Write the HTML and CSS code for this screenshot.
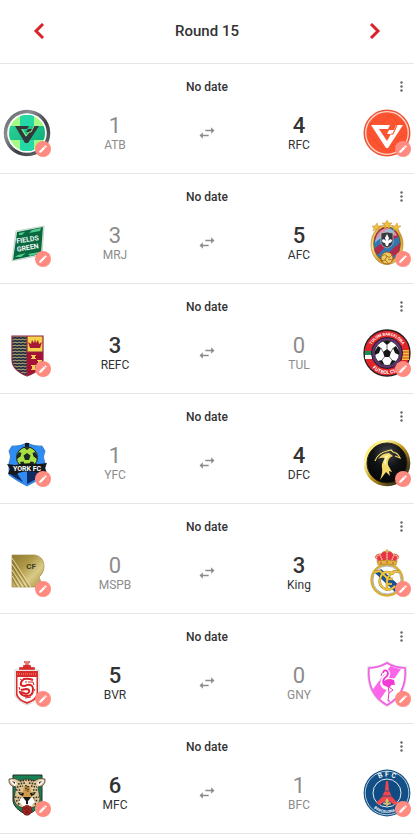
FILE: index.html
```
<!DOCTYPE html>
<html lang="en">
   <head>
      <meta charset="utf-8">
      <meta name="viewport" content="width=device-width, initial-scale=1">
      <title>Round 15</title>
      <link rel="stylesheet" href="styles.css">
   </head>
   <body>
      <!-- shared icons -->
      <svg class="sprite" aria-hidden="true">
         <symbol id="swap" viewBox="0 0 24 24">
            <path d="M7 11l-4 4 4 4v-3h7v-2H7zM21 9l-4-4v3h-7v2h7v3z" />
         </symbol>
         <symbol id="more" viewBox="0 0 16 16">
            <circle cx="8.500" cy="3.500" r="1.200" /><circle cx="8.500" cy="7.500" r="1.200" /><circle cx="8.500" cy="11.500" r="1.200" />
         </symbol>
         <symbol id="edit" viewBox="0 0 24 24">
            <path d="M3 17.2V21h3.8L17.8 9.9l-3.7-3.7zM20.7 7a1 1 0 0 0 0-1.4l-2.3-2.3a1 1 0 0 0-1.4 0l-1.9 1.8 3.8 3.8z" />
         </symbol>
      </svg>

      <header class="round">
         <button class="nav" aria-label="Previous round">
            <svg viewBox="0 0 16 16"><path d="M12 1L5 8l7 7" /></svg>
         </button>
         <h1>Round 15</h1>
         <button class="nav" aria-label="Next round">
            <svg viewBox="0 0 16 16"><path d="M4 1l7 7-7 7" /></svg>
         </button>
      </header>

      <main>
         <section class="match">
            <div class="date">
               <span>No date</span>
               <button class="more" aria-label="More"><svg><use href="#more" /></svg></button>
            </div>
            <div class="teams">
               <div class="crest">
                  <svg viewBox="0 0 48 48">
                     <defs>
                        <linearGradient id="steel" x1="0" y1="0" x2="1" y2="1">
                           <stop offset="0" stop-color="#54565c" /><stop offset=".3" stop-color="#8b8e93" />
                           <stop offset=".6" stop-color="#3c3e44" /><stop offset="1" stop-color="#777a80" />
                        </linearGradient>
                        <linearGradient id="teal" x1="0" y1="0" x2="1" y2="1">
                           <stop offset="0" stop-color="#2fdc9c" /><stop offset="1" stop-color="#08a577" />
                        </linearGradient>
                        <clipPath id="atb"><circle cx="24" cy="24" r="18" /></clipPath>
                     </defs>
                     <circle cx="24" cy="24" r="23.300" fill="url(#steel)" />
                     <circle cx="24" cy="24" r="19.800" fill="#fff" />
                     <g clip-path="url(#atb)">
                        <path fill="#a4fb85" d="M4 4h40v40H4z" />
                        <path fill="url(#teal)" d="M17 4h14v13h13v14H31v13H17V31H4V17h13z" />
                        <path fill="#24d9a5" d="M17 4h14v13H17zM17 31h14v14H17z" />
                     </g>
                     <path fill="#34383a" d="M12 17h14l-2 3h-6l5 8 3-5h-3l2-3h4l2-3h5L25 34h-3z" />
                     <path fill="none" stroke="#a4fb85" stroke-width=".9" d="M19 20l4 7 3-4M26 23h2l3-6" />
                  </svg>
                  <button class="edit" aria-label="Edit ATB"><svg><use href="#edit" /></svg></button>
               </div>
               <div class="score"><b>1</b><span>ATB</span></div>
               <button class="swap" aria-label="Swap teams"><svg><use href="#swap" /></svg></button>
               <div class="score win"><b>4</b><span>RFC</span></div>
               <div class="crest">
                  <svg viewBox="0 0 48 48">
                     <circle cx="24" cy="24" r="23.500" fill="#ee5537" />
                     <circle cx="24" cy="24" r="21.300" fill="#fc5430" stroke="#ffd9cd" stroke-width="1.300" />
                     <path fill="none" stroke="#e9482a" stroke-width=".7" d="M7 16q5-6 9-3t8-4 9 3 7 2M5 25q4 1 6 5t6 7 8 5M31 40q6-5 4-8t7-6" />
                     <path fill="#fff" d="M8 16h19l-2 4h-9l8 12 4-7h-4l2-4h5l2-5h7L25 39h-2z" />
                     <path fill="none" stroke="#fc5430" stroke-width="1.100" d="M28 25h2l4-9" />
                  </svg>
                  <button class="edit" aria-label="Edit RFC"><svg><use href="#edit" /></svg></button>
               </div>
            </div>
         </section>

         <section class="match">
            <div class="date">
               <span>No date</span>
               <button class="more" aria-label="More"><svg><use href="#more" /></svg></button>
            </div>
            <div class="teams">
               <div class="crest">
                  <svg viewBox="0 0 48 48">
                     <path fill="#eef5f0" stroke="#9fb9aa" stroke-width=".6" d="M13 12l28-5-2 29-30 6z" />
                     <path fill="#08683f" d="M14 13l26-5-2 27-28 6z" />
                     <path fill="#52c98d" d="M16 14l6-1-3 3h-3zM29 11l9-2-1 3-11 2zM12 38l3-2 8-2-5 4zM25 35l11-2v2l-9 2z" />
                     <g class="crest-text" fill="#f3f8f4" transform="rotate(-9 24 24)">
                        <text x="25" y="23" font-size="7">FIELDS</text>
                        <text x="24" y="31" font-size="7">GREEN</text>
                     </g>
                  </svg>
                  <button class="edit" aria-label="Edit MRJ"><svg><use href="#edit" /></svg></button>
               </div>
               <div class="score"><b>3</b><span>MRJ</span></div>
               <button class="swap" aria-label="Swap teams"><svg><use href="#swap" /></svg></button>
               <div class="score win"><b>5</b><span>AFC</span></div>
               <div class="crest">
                  <svg viewBox="0 0 48 48">
                     <defs>
                        <linearGradient id="stripes" x1="0" y1="0" x2="8" y2="9" gradientUnits="userSpaceOnUse" spreadMethod="repeat">
                           <stop offset="0" stop-color="#2f78b4" /><stop offset=".5" stop-color="#2f78b4" />
                           <stop offset=".5" stop-color="#b02a50" /><stop offset="1" stop-color="#b02a50" />
                        </linearGradient>
                        <linearGradient id="gold" x1="0" y1="0" x2="1" y2="1">
                           <stop offset="0" stop-color="#c98d20" /><stop offset=".3" stop-color="#ffe58b" />
                           <stop offset=".6" stop-color="#d29a28" /><stop offset="1" stop-color="#f7d365" />
                        </linearGradient>
                     </defs>
                     <ellipse cx="24" cy="25.500" rx="16" ry="20" fill="url(#gold)" stroke="#a9731c" stroke-width=".6" />
                     <ellipse cx="24" cy="25" rx="13.300" ry="17.300" fill="url(#stripes)" stroke="#704713" stroke-width=".7" />
                     <path fill="#fff" opacity=".5" d="M12 24q1-13 12-15 8 1 10 8-13-3-22 7z" />
                     <path fill="#363a40" stroke="#c3cacd" stroke-width=".7" d="M18 14l6-1 6 1v10q-1 4-6 5-5-1-6-5z" />
                     <path fill="#fff" d="M24 15l2 4-1 3q2-3 4-1 0 3-3 3l-1 3h-2l-1-3q-3 0-3-3 2-2 4 1l-1-3z" />
                     <path fill="#f3bf3f" stroke="#b57918" stroke-width=".4" d="M24 1l1.500 3h3.500l-3 2 1 4-3-2-3 2 1-4-3-2h3.500zM14 4l1 3h3l-3 2 1 3-3-2-3 2 1-3-2-2h3zM34 4l1 3h3l-3 2 1 3-3-2-3 2 1-3-2-2h3z" />
                     <circle cx="24" cy="39" r="6" fill="#f1ca62" stroke="#8b5310" stroke-width=".8" />
                     <path fill="none" stroke="#8b5310" stroke-width=".7" d="M19 37q3-3 5 0t5-1M24 37l-2 4 3 3M22 41l-4 1M25 40l4 1" />
                  </svg>
                  <button class="edit" aria-label="Edit AFC"><svg><use href="#edit" /></svg></button>
               </div>
            </div>
         </section>

         <section class="match">
            <div class="date">
               <span>No date</span>
               <button class="more" aria-label="More"><svg><use href="#more" /></svg></button>
            </div>
            <div class="teams">
               <div class="crest">
                  <svg viewBox="0 0 48 48">
                     <defs>
                        <pattern id="waves" width="4" height="3" patternUnits="userSpaceOnUse">
                           <path fill="#222c43" d="M0 0h4v3H0z" /><path fill="none" stroke="#d8c878" stroke-width=".9" d="M0 1l2 1 2-1" />
                        </pattern>
                        <clipPath id="refc"><path d="M9 7h31v24q0 10-16 16Q9 41 9 31z" /></clipPath>
                     </defs>
                     <g clip-path="url(#refc)">
                        <path fill="url(#waves)" d="M8 6h16v42H8z" />
                        <path fill="#f8d24a" d="M24 6h16v17H24z" />
                        <path fill="#a51235" d="M24 23h16v25H24z" />
                     </g>
                     <path fill="none" stroke="#8b2940" stroke-width="1.200" d="M9 7h31v24q0 10-16 16Q9 41 9 31zM24 7v39M24 23h16" />
                     <path fill="#a61936" d="M27 19l-2-6 3 2 1-4 2 3 1-4 1 4 2-3 1 4 3-2-2 6z" />
                     <path fill="#eed054" d="M28 26h5v1h-1v2h1v1h-5v-1h1v-2h-1zM34 31h5v1h-1v2h1v1h-5v-1h1v-2h-1zM28 36h5v1h-1v3h1v1h-5v-1h1v-3h-1z" />
                  </svg>
                  <button class="edit" aria-label="Edit REFC"><svg><use href="#edit" /></svg></button>
               </div>
               <div class="score win"><b>3</b><span>REFC</span></div>
               <button class="swap" aria-label="Swap teams"><svg><use href="#swap" /></svg></button>
               <div class="score"><b>0</b><span>TUL</span></div>
               <div class="crest">
                  <svg viewBox="0 0 48 48">
                     <defs>
                        <path id="tul-top" d="M6.500 24a17.500 17.500 0 0 1 35 0" />
                        <path id="tul-bottom" d="M3 24a21 21 0 0 0 42 0" />
                     </defs>
                     <circle cx="24" cy="24" r="23" fill="#e22528" stroke="#251d20" stroke-width="1.300" />
                     <path fill="#189055" d="M2 22h7v4H2z" /><path fill="#fff" d="M2 26h7v4H2z" />
                     <path fill="#f4c437" d="M39 21h7v10h-7z" /><path stroke="#d73527" d="M39 23h7M39 26h7M39 29h7" />
                     <circle cx="24" cy="24" r="15.500" fill="#61336f" stroke="#29192d" />
                     <circle cx="24" cy="24" r="12.500" fill="#fff" stroke="#111" stroke-width=".8" />
                     <path fill="#161619" d="M24 20l4 3-1.500 5h-5L20 23zM20 12.500q4-1.500 8 0L24 16zM12 22l3-5 3 2-2 5-4 2zM36 22l-3-5-3 2 2 5 4 2zM15 32l4-1 2 4-1 1zM33 32l-4-1-2 4 1 1z" />
                     <path stroke="#333" stroke-width=".7" d="M24 16v4M18 19l2 4M30 19l-2 4M21.500 28L19 31M26.500 28l2.500 3" fill="none" />
                     <g class="crest-text" fill="#fff" font-size="4">
                        <text><textPath href="#tul-top" startOffset="50%">TULUM BARCELONA</textPath></text>
                        <text font-size="5"><textPath href="#tul-bottom" startOffset="50%">FUTBOL CLUB</textPath></text>
                     </g>
                  </svg>
                  <button class="edit" aria-label="Edit TUL"><svg><use href="#edit" /></svg></button>
               </div>
            </div>
         </section>

         <section class="match">
            <div class="date">
               <span>No date</span>
               <button class="more" aria-label="More"><svg><use href="#more" /></svg></button>
            </div>
            <div class="teams">
               <div class="crest">
                  <svg viewBox="0 0 48 48">
                     <path fill="#2e8cf2" stroke="#1c65b9" stroke-width=".7" d="M24 4q8 4 15 3l3 5q-3 6 0 12v12q-8 6-18 11Q14 42 6 36V24q3-6 0-12l3-5q7 1 15-3z" />
                     <path fill="#102a62" d="M24 29h16v6q-6 5-16 10zM8 33h5l7 10Q12 39 8 36z" />
                     <path fill="#16191b" d="M22 4h4v7h-4z" />
                     <circle cx="24" cy="18.500" r="10.500" fill="#a8e042" stroke="#182027" />
                     <path fill="#1d2a22" d="M24 14l3.500 2.500L26 21h-4l-1.500-4.500zM21 8.500h6L24 11zM14 16l2-3 2.500 1-1 3.500L14 20zM34 16l-2-3-2.500 1 1 3.500L34 20zM17 23l3.500-.5L22 26h-4zM31 23l-3.500-.5L26 26h4z" />
                     <path fill="#17181b" d="M4 25l8 1q12-3 24-1l8-1-2 5 2 5-9 1-2-2q-9-2-18 1l-1 2-9-1 2-5z" />
                     <text class="crest-text" x="24" y="32" fill="#fff" font-size="7">YORK FC</text>
                  </svg>
                  <button class="edit" aria-label="Edit YFC"><svg><use href="#edit" /></svg></button>
               </div>
               <div class="score"><b>1</b><span>YFC</span></div>
               <button class="swap" aria-label="Swap teams"><svg><use href="#swap" /></svg></button>
               <div class="score win"><b>4</b><span>DFC</span></div>
               <div class="crest">
                  <svg viewBox="0 0 48 48">
                     <defs>
                        <linearGradient id="rim" x1="0" y1="0" x2="1" y2="1">
                           <stop offset="0" stop-color="#f1cb22" /><stop offset=".25" stop-color="#fff9a5" />
                           <stop offset=".5" stop-color="#c29617" /><stop offset=".8" stop-color="#41351b" /><stop offset="1" stop-color="#f4db67" />
                        </linearGradient>
                        <radialGradient id="dome" cx=".5" cy=".25" r=".8">
                           <stop offset="0" stop-color="#45484a" /><stop offset=".45" stop-color="#101214" /><stop offset="1" stop-color="#020303" />
                        </radialGradient>
                     </defs>
                     <circle cx="24" cy="24" r="23.300" fill="url(#rim)" />
                     <circle cx="24" cy="24" r="20" fill="url(#dome)" stroke="#292516" />
                     <path fill="none" stroke="#f4d96b" stroke-width="1.200" d="M12 22q3-8 12-10l4-1 2 2q5 1 7 6l-5-2" />
                     <path fill="#f4d96b" d="M15 20q4-6 11-6l4 3q-6 2-5 9l4 7-3-1 1 5-4-4-6 8q3-8 2-12t3-10q-4-1-7 1z" />
                     <path fill="#fff5b2" d="M22 17l5-1q-5 3-4 10l-2-2z" />
                  </svg>
                  <button class="edit" aria-label="Edit DFC"><svg><use href="#edit" /></svg></button>
               </div>
            </div>
         </section>

         <section class="match">
            <div class="date">
               <span>No date</span>
               <button class="more" aria-label="More"><svg><use href="#more" /></svg></button>
            </div>
            <div class="teams">
               <div class="crest">
                  <svg viewBox="0 0 48 48">
                     <defs>
                        <linearGradient id="brass" x1="0" y1="0" x2="1" y2="1">
                           <stop offset="0" stop-color="#8e7a37" /><stop offset=".35" stop-color="#ad9645" />
                           <stop offset=".65" stop-color="#d9ca88" /><stop offset="1" stop-color="#a38b39" />
                        </linearGradient>
                     </defs>
                     <path fill="url(#brass)" stroke="#a28d48" stroke-width=".7" d="M9 6h23q9 2 9 11 0 7-5 11l4 10H9z" />
                     <path fill="none" stroke="#eadda5" stroke-width=".9" d="M9 9l19 29M9 15l15 23M9 21l11 17M9 27l7 11" />
                     <path fill="none" stroke="#806d30" stroke-width=".7" d="M9 11l17 27M9 17l13 21M9 23l9 15M9 29l5 9" />
                     <text class="crest-text" x="28" y="20" fill="#403d24" font-size="8">CF</text>
                  </svg>
                  <button class="edit" aria-label="Edit MSPB"><svg><use href="#edit" /></svg></button>
               </div>
               <div class="score"><b>0</b><span>MSPB</span></div>
               <button class="swap" aria-label="Swap teams"><svg><use href="#swap" /></svg></button>
               <div class="score win"><b>3</b><span>King</span></div>
               <div class="crest">
                  <svg viewBox="0 0 48 48">
                     <circle cx="24" cy="31" r="15.500" fill="#fff" stroke="#d8ae36" stroke-width="2.400" />
                     <path fill="#17539a" d="M12 24l6-4 19 17-5 6z" />
                     <circle cx="24" cy="31" r="14" fill="none" stroke="#718aa0" stroke-width=".6" />
                     <g fill="none" stroke="#9d7623" stroke-width="2.400"><path d="M31 25q-9-5-13 2-4 9 4 13 6 2 10-3" /><path d="M12 23l5-1 7 7 7-7 5 1M24 29v11M24 30h6M24 35h5" /></g>
                     <g fill="none" stroke="#f1c942" stroke-width="1.600"><path d="M31 25q-9-5-13 2-4 9 4 13 6 2 10-3" /><path d="M12 23l5-1 7 7 7-7 5 1M24 29v11M24 30h6M24 35h5" /></g>
                     <path fill="#e73446" stroke="#c98c38" stroke-width=".6" d="M15 13l-3-5q2-4 6-3 2-4 6-2 4-2 6 2 4-1 6 3l-3 5z" />
                     <path fill="none" stroke="#f8dfae" stroke-width="1.300" stroke-dasharray="1.500 .7" d="M15 13q-4-6 2-7l3 7M33 13q4-6-2-7l-3 7M24 3v10" />
                     <path fill="#e3b43f" stroke="#a77328" stroke-width=".6" d="M14 12q10-2 20 0l-1 4q-9-2-18 0z" />
                     <path stroke="#c8444c" stroke-width="1.200" d="M17 14h2M23 13h2M29 14h2" /><path stroke="#d2a737" d="M24 0v4M22 2h4" />
                  </svg>
                  <button class="edit" aria-label="Edit King"><svg><use href="#edit" /></svg></button>
               </div>
            </div>
         </section>

         <section class="match">
            <div class="date">
               <span>No date</span>
               <button class="more" aria-label="More"><svg><use href="#more" /></svg></button>
            </div>
            <div class="teams">
               <div class="crest">
                  <svg viewBox="0 0 48 48">
                     <path fill="#fff" stroke="#bbb" stroke-width=".7" d="M12 11h24v25q-2 6-12 10-10-4-12-10z" />
                     <path fill="#d92b2b" d="M13 12h22v24q-1 5-11 9-10-4-11-9z" />
                     <path fill="#fff" d="M14.500 18h19v17q-1 5-9.500 8-8.500-3-9.500-8z" />
                     <path fill="#d92b2b" stroke="#ddd" stroke-width=".4" d="M16 11V8l4 0V6h2V4h-1V2h6v2h-1v2h2v2l4 0v3z" />
                     <path stroke="#ffe4df" stroke-width=".8" d="M22 3h4M22 5h4" />
                     <path stroke="#f5a071" d="M14 15h20" stroke-dasharray="1 1" />
                     <path fill="none" stroke="#d82224" stroke-width="2" d="M30 21q-5-2-9-1-4 3-3 6 3 2 6 0 6-1 6 4 0 7-6 7-6 0-7-4l4 1q3 2 5-1 1-3-3-3l-5 1" />
                     <path fill="none" stroke="#d82224" stroke-width="1" d="M17 20l3 2M25 23l5 0 1 3M17 31l-1-3M22 39l6-1M22 23h2M31 32l1-2" />
                  </svg>
                  <button class="edit" aria-label="Edit BVR"><svg><use href="#edit" /></svg></button>
               </div>
               <div class="score win"><b>5</b><span>BVR</span></div>
               <button class="swap" aria-label="Swap teams"><svg><use href="#swap" /></svg></button>
               <div class="score"><b>0</b><span>GNY</span></div>
               <div class="crest">
                  <svg viewBox="0 0 48 48">
                     <defs><clipPath id="gny"><path d="M24 5q7 5 17 5 2 24-17 36Q5 34 7 10q10 0 17-5z" /></clipPath></defs>
                     <path fill="#fff" stroke="#d5ccd4" stroke-width="3.200" d="M24 4q8 5 18 5 2 26-18 37Q4 35 6 9q10 0 18-5z" />
                     <path fill="#fff" stroke="#f85de7" stroke-width="1.600" d="M24 4q8 5 18 5 2 26-18 37Q4 35 6 9q10 0 18-5z" />
                     <path clip-path="url(#gny)" fill="#fb65e9" d="M29 5l9 5L16 42 7 34z" />
                     <path fill="none" stroke="#fff" stroke-width="5" d="M19 15q1-5 4-3 3 2 1 5-4 3-4 6" />
                     <path fill="#fff" d="M17 24q6-7 16-4 1 7-5 10v12h-4V31q-6-1-7-7z" />
                     <path fill="none" stroke="#ef32cf" stroke-width="1.700" d="M20 14q1-4 4-2 2 2 0 5-4 3-4 6" />
                     <path fill="#f23bd5" d="M19 24q5-6 12-3l1 5q-4-1-5 2-6 0-8-4z" />
                     <path fill="none" stroke="#e42fc7" stroke-width="1" d="M25 27l1 6-1 9h2M26 28l4 3-4 3M19 14l-1 3" />
                  </svg>
                  <button class="edit" aria-label="Edit GNY"><svg><use href="#edit" /></svg></button>
               </div>
            </div>
         </section>

         <section class="match">
            <div class="date">
               <span>No date</span>
               <button class="more" aria-label="More"><svg><use href="#more" /></svg></button>
            </div>
            <div class="teams">
               <div class="crest">
                  <svg viewBox="0 0 48 48">
                     <path fill="#168052" stroke="#242d27" d="M10 6h29v26q-2 8-15 14Q11 40 10 32z" />
                     <path fill="#dcc596" stroke="#302b21" stroke-width=".7" d="M13 18q-8-1-7-8 6-2 11 2 7-4 14 0 5-4 11-2 1 7-7 8l2 12q0 5-6 8l-7 2-7-2q-6-3-6-8z" />
                     <path fill="#f6eee9" d="M7 11q5-1 7 4l-2 2q-4-2-5-6zM41 11q-5-1-7 4l2 2q4-2 5-6z" />
                     <path fill="#3a3024" d="M9 12l3 1v2zM39 12l-3 1v2z" />
                     <path fill="#d19a4c" d="M21 17h6l2 11h-10z" />
                     <path stroke="#332b20" stroke-width="1.600" stroke-dasharray="1.500 1.200" fill="none" d="M17 12l7-1 7 1M15 15l7-1M26 14l7 1M14 18l6-1M28 17l6 1M13 21l5 0M30 21l5 0M12 28l6 1M30 29l6-1M13 32l5-1M30 31l5 1M15 35l4-1M29 34l4 1M23 16v6M25 17v6" />
                     <path fill="#191a16" d="M15 23l6 1-1 3-3-1zM33 23l-6 1 1 3 3-1z" />
                     <path fill="#e5b94d" d="M17 24l2 0-1 1zM31 24l-2 0 1 1z" />
                     <path fill="#fff" d="M18 29l6 1 6-1 2 4-4 4h-8l-4-4z" />
                     <path fill="#191a16" d="M20 28h8l-2 3-1 1v3h-2v-3l-1-1z" />
                     <path fill="#a52222" stroke="#6c1c1c" stroke-width=".7" d="M20 38l4-2 4 2 1 4-3 4h-4l-3-4z" />
                     <path fill="none" stroke="#62191b" stroke-width=".8" d="M21 40q3-3 5 0-1 4-3 1M22 44l4-1" />
                  </svg>
                  <button class="edit" aria-label="Edit MFC"><svg><use href="#edit" /></svg></button>
               </div>
               <div class="score win"><b>6</b><span>MFC</span></div>
               <button class="swap" aria-label="Swap teams"><svg><use href="#swap" /></svg></button>
               <div class="score"><b>1</b><span>BFC</span></div>
               <div class="crest">
                  <svg viewBox="0 0 48 48">
                     <defs>
                        <path id="bfc-top" d="M8.500 23a15.500 15.500 0 0 1 31 0" />
                        <path id="bfc-bottom" d="M4 24a20 20 0 0 0 40 0" />
                     </defs>
                     <circle cx="24" cy="24" r="23.400" fill="#124f86" />
                     <circle cx="24" cy="24" r="21.800" fill="none" stroke="#dbe6eb" stroke-width=".8" />
                     <circle cx="24" cy="24" r="14" fill="#104c83" stroke="#e2ebef" />
                     <path fill="#ef4650" d="M23 12h2l1 9 3 7 6 6-4 2q-7-8-14 0l-4-2 6-6 3-7z" />
                     <path stroke="#104c83" stroke-width=".8" d="M21 22h6M19 27h10" />
                     <path fill="#d6bb6c" d="M24 29l2 3-1 2q3-2 3 1l-3 1-1 2-1-2-3-1q0-3 3-1l-1-2z" />
                     <g class="crest-text" fill="#f6f8f8">
                        <text font-size="7"><textPath href="#bfc-top" startOffset="50%">B F C</textPath></text>
                        <text font-size="4"><textPath href="#bfc-bottom" startOffset="50%">BARCELONA FC</textPath></text>
                     </g>
                  </svg>
                  <button class="edit" aria-label="Edit BFC"><svg><use href="#edit" /></svg></button>
               </div>
            </div>
         </section>
      </main>
   </body>
</html>
```
FILE: styles.css
```
body {
   margin: 0px 3px 0px 0px;
   background-color: white;
   color: #333;
   font-family: Roboto, Arial, sans-serif;
   font-size: 12px;
}

button {
   border: none;
   padding: 0px;
   background: none;
   cursor: pointer;
}

svg {
   display: block;
}

.sprite {
   display: none;
}

.round {
   display: flex;
   justify-content: space-between;
   align-items: center;
   padding: 20px 31px 21px;
   border-bottom: 1px solid #e6e6e6;
}

.round h1 {
   margin: 0px;
   font-size: 15px;
   line-height: 22px;
   font-weight: 500;
}

.nav svg {
   width: 16px;
   height: 16px;
   fill: none;
   stroke: #d8232a;
   stroke-width: 3;
}

.match {
   padding: 15px 3px 16px;
   border-bottom: 1px solid #e6e6e6;
}

.date {
   display: grid;
   grid-template-columns: 1fr auto 1fr;
   line-height: 16px;
   margin-bottom: 14px;
   font-weight: 500;
}

.date span {
   grid-column: 2;
}

.more {
   justify-self: end;
   margin-right: 2px;
}

.more svg {
   width: 16px;
   height: 16px;
   fill: #666;
}

.teams {
   display: grid;
   grid-template-columns: 48px 1fr 56px 1fr 48px;
   column-gap: 3px;
   align-items: center;
}

.crest {
   position: relative;
   height: 48px;
}

.crest > svg {
   width: 48px;
   height: 48px;
}

.crest-text {
   font-family: Roboto, Arial, sans-serif;
   font-weight: bold;
   text-anchor: middle;
}

.edit {
   position: absolute;
   right: 0px;
   bottom: 0px;
   width: 16px;
   height: 16px;
   border-radius: 50%;
   background-color: #ff8a80;
}

.edit svg {
   width: 10px;
   height: 10px;
   margin: 0px auto;
   fill: white;
}

.score {
   display: flex;
   flex-direction: column;
   align-items: center;
   color: #8c8c8c;
   line-height: 14px;
}

.score b {
   font-size: 22px;
   line-height: 24px;
   font-weight: normal;
}

.win {
   color: #333;
}

.win b {
   font-weight: 500;
}

.swap {
   justify-self: center;
}

.swap svg {
   width: 20px;
   height: 20px;
   fill: #8c8c8c;
}
```
